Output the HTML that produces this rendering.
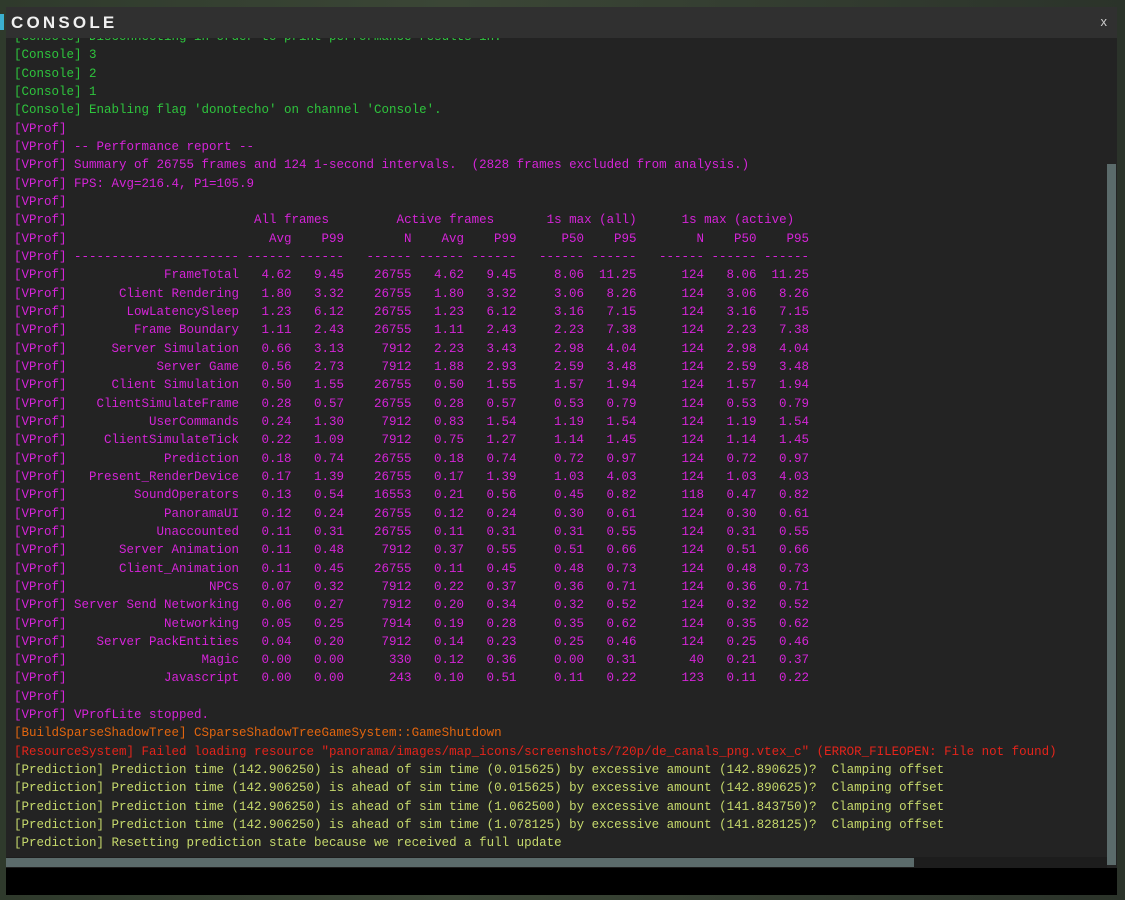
<!DOCTYPE html>
<html><head><meta charset="utf-8"><style>
body{margin:0;width:1125px;height:900px;overflow:hidden;background:#2a3128;position:relative;font-family:"Liberation Mono",monospace}
.bg1{position:absolute;left:0;top:0;width:1125px;height:900px;background:linear-gradient(90deg,#2f3a2c 0,#3b4636 40%,#2b332a 100%)}
.win{position:absolute;left:6px;top:7px;width:1111px;height:888px;background:#232323}
.title{position:absolute;left:0;top:0;width:1111px;height:31px;background:#303030}
.title span{position:absolute;left:5px;top:6px;font-family:"Liberation Sans",sans-serif;font-weight:bold;font-size:17px;letter-spacing:3.2px;color:#f0f0f0}
.x{position:absolute;right:10px;top:7px;font-family:"Liberation Sans",sans-serif;font-size:13px;color:#ccc}
.cont{position:absolute;left:0;top:31px;width:1100px;height:820px;overflow:hidden}
.txt{position:absolute;left:8px;top:-10px;font-size:12.5px;line-height:18.34px;white-space:normal}
.txt>div{white-space:pre;height:18.34px}
.g{color:#2ec43d}.m{color:#d524d8}.o{color:#e2660f}.r{color:#e4241b}.y{color:#c6d96c}
.row span{display:inline-block;text-align:right;width:7ch}
.row span.n{width:22ch}.row span.w{width:9ch}.row span.p{width:8ch;text-align:left}
.vs{position:absolute;left:1101px;top:157px;width:9px;height:701px;background:#5b6b6b}
.hs{position:absolute;left:0;top:851px;width:908px;height:9px;background:#5b6b6b}
.hst{position:absolute;left:0;top:850px;width:1101px;height:11px;background:#1d1d1d}
.inp{position:absolute;left:0;top:861px;width:1111px;height:27px;background:#000}
.stub{position:absolute;left:0;top:14px;width:4px;height:16px;background:#3cb0d0}
</style></head><body>
<div class="bg1"></div>
<div class="stub"></div>
<div class="win">
<div class="title"><span>CONSOLE</span><div class="x">x</div></div>
<div class="cont"><div class="txt"><div class="g">[Console] Disconnecting in order to print performance results in:</div><div class="g">[Console] 3</div><div class="g">[Console] 2</div><div class="g">[Console] 1</div><div class="g">[Console] Enabling flag 'donotecho' on channel 'Console'.</div><div class="m">[VProf]</div><div class="m">[VProf] -- Performance report --</div><div class="m">[VProf] Summary of 26755 frames and 124 1-second intervals.  (2828 frames excluded from analysis.)</div><div class="m">[VProf] FPS: Avg=216.4, P1=105.9</div><div class="m">[VProf]</div><div class="m">[VProf]                         All frames         Active frames       1s max (all)      1s max (active)</div>
<div class="m row"><span class="p">[VProf]</span><span class="n"></span><span>Avg</span><span>P99</span><span class="w">N</span><span>Avg</span><span>P99</span><span class="w">P50</span><span>P95</span><span class="w">N</span><span>P50</span><span>P95</span></div>
<div class="m row"><span class="p">[VProf]</span><span class="n">----------------------</span><span>------</span><span>------</span><span class="w">------</span><span>------</span><span>------</span><span class="w">------</span><span>------</span><span class="w">------</span><span>------</span><span>------</span></div>
<div class="m row"><span class="p">[VProf]</span><span class="n">FrameTotal</span><span>4.62</span><span>9.45</span><span class="w">26755</span><span>4.62</span><span>9.45</span><span class="w">8.06</span><span>11.25</span><span class="w">124</span><span>8.06</span><span>11.25</span></div>
<div class="m row"><span class="p">[VProf]</span><span class="n">Client Rendering</span><span>1.80</span><span>3.32</span><span class="w">26755</span><span>1.80</span><span>3.32</span><span class="w">3.06</span><span>8.26</span><span class="w">124</span><span>3.06</span><span>8.26</span></div>
<div class="m row"><span class="p">[VProf]</span><span class="n">LowLatencySleep</span><span>1.23</span><span>6.12</span><span class="w">26755</span><span>1.23</span><span>6.12</span><span class="w">3.16</span><span>7.15</span><span class="w">124</span><span>3.16</span><span>7.15</span></div>
<div class="m row"><span class="p">[VProf]</span><span class="n">Frame Boundary</span><span>1.11</span><span>2.43</span><span class="w">26755</span><span>1.11</span><span>2.43</span><span class="w">2.23</span><span>7.38</span><span class="w">124</span><span>2.23</span><span>7.38</span></div>
<div class="m row"><span class="p">[VProf]</span><span class="n">Server Simulation</span><span>0.66</span><span>3.13</span><span class="w">7912</span><span>2.23</span><span>3.43</span><span class="w">2.98</span><span>4.04</span><span class="w">124</span><span>2.98</span><span>4.04</span></div>
<div class="m row"><span class="p">[VProf]</span><span class="n">Server Game</span><span>0.56</span><span>2.73</span><span class="w">7912</span><span>1.88</span><span>2.93</span><span class="w">2.59</span><span>3.48</span><span class="w">124</span><span>2.59</span><span>3.48</span></div>
<div class="m row"><span class="p">[VProf]</span><span class="n">Client Simulation</span><span>0.50</span><span>1.55</span><span class="w">26755</span><span>0.50</span><span>1.55</span><span class="w">1.57</span><span>1.94</span><span class="w">124</span><span>1.57</span><span>1.94</span></div>
<div class="m row"><span class="p">[VProf]</span><span class="n">ClientSimulateFrame</span><span>0.28</span><span>0.57</span><span class="w">26755</span><span>0.28</span><span>0.57</span><span class="w">0.53</span><span>0.79</span><span class="w">124</span><span>0.53</span><span>0.79</span></div>
<div class="m row"><span class="p">[VProf]</span><span class="n">UserCommands</span><span>0.24</span><span>1.30</span><span class="w">7912</span><span>0.83</span><span>1.54</span><span class="w">1.19</span><span>1.54</span><span class="w">124</span><span>1.19</span><span>1.54</span></div>
<div class="m row"><span class="p">[VProf]</span><span class="n">ClientSimulateTick</span><span>0.22</span><span>1.09</span><span class="w">7912</span><span>0.75</span><span>1.27</span><span class="w">1.14</span><span>1.45</span><span class="w">124</span><span>1.14</span><span>1.45</span></div>
<div class="m row"><span class="p">[VProf]</span><span class="n">Prediction</span><span>0.18</span><span>0.74</span><span class="w">26755</span><span>0.18</span><span>0.74</span><span class="w">0.72</span><span>0.97</span><span class="w">124</span><span>0.72</span><span>0.97</span></div>
<div class="m row"><span class="p">[VProf]</span><span class="n">Present_RenderDevice</span><span>0.17</span><span>1.39</span><span class="w">26755</span><span>0.17</span><span>1.39</span><span class="w">1.03</span><span>4.03</span><span class="w">124</span><span>1.03</span><span>4.03</span></div>
<div class="m row"><span class="p">[VProf]</span><span class="n">SoundOperators</span><span>0.13</span><span>0.54</span><span class="w">16553</span><span>0.21</span><span>0.56</span><span class="w">0.45</span><span>0.82</span><span class="w">118</span><span>0.47</span><span>0.82</span></div>
<div class="m row"><span class="p">[VProf]</span><span class="n">PanoramaUI</span><span>0.12</span><span>0.24</span><span class="w">26755</span><span>0.12</span><span>0.24</span><span class="w">0.30</span><span>0.61</span><span class="w">124</span><span>0.30</span><span>0.61</span></div>
<div class="m row"><span class="p">[VProf]</span><span class="n">Unaccounted</span><span>0.11</span><span>0.31</span><span class="w">26755</span><span>0.11</span><span>0.31</span><span class="w">0.31</span><span>0.55</span><span class="w">124</span><span>0.31</span><span>0.55</span></div>
<div class="m row"><span class="p">[VProf]</span><span class="n">Server Animation</span><span>0.11</span><span>0.48</span><span class="w">7912</span><span>0.37</span><span>0.55</span><span class="w">0.51</span><span>0.66</span><span class="w">124</span><span>0.51</span><span>0.66</span></div>
<div class="m row"><span class="p">[VProf]</span><span class="n">Client_Animation</span><span>0.11</span><span>0.45</span><span class="w">26755</span><span>0.11</span><span>0.45</span><span class="w">0.48</span><span>0.73</span><span class="w">124</span><span>0.48</span><span>0.73</span></div>
<div class="m row"><span class="p">[VProf]</span><span class="n">NPCs</span><span>0.07</span><span>0.32</span><span class="w">7912</span><span>0.22</span><span>0.37</span><span class="w">0.36</span><span>0.71</span><span class="w">124</span><span>0.36</span><span>0.71</span></div>
<div class="m row"><span class="p">[VProf]</span><span class="n">Server Send Networking</span><span>0.06</span><span>0.27</span><span class="w">7912</span><span>0.20</span><span>0.34</span><span class="w">0.32</span><span>0.52</span><span class="w">124</span><span>0.32</span><span>0.52</span></div>
<div class="m row"><span class="p">[VProf]</span><span class="n">Networking</span><span>0.05</span><span>0.25</span><span class="w">7914</span><span>0.19</span><span>0.28</span><span class="w">0.35</span><span>0.62</span><span class="w">124</span><span>0.35</span><span>0.62</span></div>
<div class="m row"><span class="p">[VProf]</span><span class="n">Server PackEntities</span><span>0.04</span><span>0.20</span><span class="w">7912</span><span>0.14</span><span>0.23</span><span class="w">0.25</span><span>0.46</span><span class="w">124</span><span>0.25</span><span>0.46</span></div>
<div class="m row"><span class="p">[VProf]</span><span class="n">Magic</span><span>0.00</span><span>0.00</span><span class="w">330</span><span>0.12</span><span>0.36</span><span class="w">0.00</span><span>0.31</span><span class="w">40</span><span>0.21</span><span>0.37</span></div>
<div class="m row"><span class="p">[VProf]</span><span class="n">Javascript</span><span>0.00</span><span>0.00</span><span class="w">243</span><span>0.10</span><span>0.51</span><span class="w">0.11</span><span>0.22</span><span class="w">123</span><span>0.11</span><span>0.22</span></div>
<div class="m">[VProf]</div><div class="m">[VProf] VProfLite stopped.</div><div class="o">[BuildSparseShadowTree] CSparseShadowTreeGameSystem::GameShutdown</div><div class="r">[ResourceSystem] Failed loading resource "panorama/images/map_icons/screenshots/720p/de_canals_png.vtex_c" (ERROR_FILEOPEN: File not found)</div><div class="y">[Prediction] Prediction time (142.906250) is ahead of sim time (0.015625) by excessive amount (142.890625)?  Clamping offset</div><div class="y">[Prediction] Prediction time (142.906250) is ahead of sim time (0.015625) by excessive amount (142.890625)?  Clamping offset</div><div class="y">[Prediction] Prediction time (142.906250) is ahead of sim time (1.062500) by excessive amount (141.843750)?  Clamping offset</div><div class="y">[Prediction] Prediction time (142.906250) is ahead of sim time (1.078125) by excessive amount (141.828125)?  Clamping offset</div><div class="y">[Prediction] Resetting prediction state because we received a full update</div></div></div>
<div class="hst"></div><div class="hs"></div>
<div class="vs"></div>
<div class="inp"></div>
</div>
</body></html>
